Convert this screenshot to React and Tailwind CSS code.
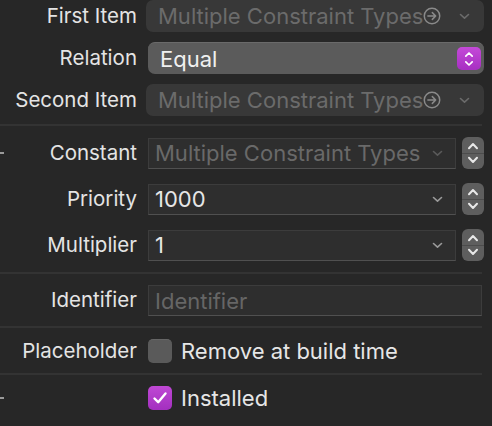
import React from "react";

const Chevron = ({ className = "" }) => (
  <svg width="11" height="7" viewBox="0 0 11 7" className={className}>
    <path d="M1.5 1.5 L5.5 5.2 L9.5 1.5" fill="none" stroke="currentColor" strokeWidth="1.6" strokeLinecap="round" strokeLinejoin="round" />
  </svg>
);

const CircleArrow = () => (
  <svg width="18" height="18" viewBox="0 0 17 17" className="text-[#8a8a8a] shrink-0">
    <circle cx="8.5" cy="8.5" r="7.3" fill="none" stroke="currentColor" strokeWidth="1.4" />
    <path d="M4.6 8.5 H12 M8.8 5.3 L12 8.5 L8.8 11.7" fill="none" stroke="currentColor" strokeWidth="1.4" strokeLinecap="round" strokeLinejoin="round" />
  </svg>
);

const Stepper = () => (
  <div className="w-[22px] h-[32px] rounded-[6px] bg-[#5e5e5e] flex flex-col items-center justify-between py-[5px] text-[#e8e8e8] shrink-0">
    <svg width="12" height="8" viewBox="0 0 12 8">
      <path d="M2 6.2 L6 2 L10 6.2" fill="none" stroke="currentColor" strokeWidth="2" strokeLinecap="round" strokeLinejoin="round" />
    </svg>
    <div className="w-full h-px bg-[#4c4c4c]" />
    <svg width="12" height="8" viewBox="0 0 12 8">
      <path d="M2 1.8 L6 6 L10 1.8" fill="none" stroke="currentColor" strokeWidth="2" strokeLinecap="round" strokeLinejoin="round" />
    </svg>
  </div>
);

const Label = ({ children }) => (
  <div className="w-[138px] shrink-0 text-right text-[#e4e4e4] text-[20.5px] pr-[1px]">{children}</div>
);

const Separator = () => <div className="h-[2px] w-[482px] bg-[#333333]" />;

const DisabledPopup = ({ text }) => (
  <div className="ml-[8px] flex-1 h-[32px] rounded-[7px] bg-[#383838] flex items-center pl-[12px] pr-[14px] text-[#6b6b6b]">
    <span className="whitespace-nowrap">{text}</span>
    <CircleArrow />
    <div className="flex-1" />
    <Chevron className="text-[#6b6b6b]" />
  </div>
);

const ComboField = ({ value, disabled }) => (
  <div className="flex items-center ml-[10px] flex-1 gap-[6px]">
    <div className="flex-1 h-[31px] bg-[#2e2e2e] border border-[#3c3c3c] border-b-[#505050] flex items-center pl-[6px] pr-[12px] overflow-hidden">
      <span className={"whitespace-nowrap " + (disabled ? "text-[#696969]" : "text-[#e6e6e6]")}>{value}</span>
      <div className="flex-1" />
      <Chevron className={"shrink-0 " + (disabled ? "text-[#5a5a5a]" : "text-[#9a9a9a]")} />
    </div>
    <Stepper />
  </div>
);

export default function App() {
  return (
    <div className="relative w-[492px] h-[426px] overflow-hidden bg-[#272727] font-['Inter',sans-serif] text-[22px] leading-none">
      {/* item / relation popups */}
      <div className="flex flex-col gap-[10px] pr-[8px]">
        <div className="flex items-center">
          <Label>First Item</Label>
          <DisabledPopup text="Multiple Constraint Types" />
        </div>
        <div className="flex items-center">
          <Label>Relation</Label>
          <div className="ml-[10px] flex-1 h-[32px] rounded-[7px] bg-[#5b5b5b] border-t border-[#6a6a6a] flex items-center pl-[12px] pr-[3px] text-[#f0f0f0]">
            <span>Equal</span>
            <div className="flex-1" />
            <div className="w-[24px] h-[23px] rounded-[5px] bg-[linear-gradient(#c44ad8,#a72fc2)] flex flex-col items-center justify-center gap-[2px] text-white">
              <svg width="10" height="7" viewBox="0 0 10 7">
                <path d="M1.8 5.2 L5 2 L8.2 5.2" fill="none" stroke="currentColor" strokeWidth="1.7" strokeLinecap="round" strokeLinejoin="round" />
              </svg>
              <svg width="10" height="7" viewBox="0 0 10 7">
                <path d="M1.8 1.8 L5 5 L8.2 1.8" fill="none" stroke="currentColor" strokeWidth="1.7" strokeLinecap="round" strokeLinejoin="round" />
              </svg>
            </div>
          </div>
        </div>
        <div className="flex items-center">
          <Label>Second Item</Label>
          <DisabledPopup text="Multiple Constraint Types" />
        </div>
      </div>

      <div className="mt-[8px]">
        <Separator />
      </div>

      {/* constant / priority / multiplier */}
      <div className="flex flex-col gap-[14px] pr-[8px] mt-[11px]">
        <div className="flex items-center">
          <Label>Constant</Label>
          <ComboField value="Multiple Constraint Types" disabled />
        </div>
        <div className="flex items-center">
          <Label>Priority</Label>
          <ComboField value="1000" />
        </div>
        <div className="flex items-center">
          <Label>Multiplier</Label>
          <ComboField value="1" />
        </div>
      </div>

      <div className="mt-[11px]">
        <Separator />
      </div>

      <div className="flex items-center mt-[11px] pr-[10px]">
        <Label>Identifier</Label>
        <div className="ml-[10px] flex-1 h-[31px] bg-[#2e2e2e] border border-[#3c3c3c] border-b-[#505050] flex items-center pl-[6px] text-[#666666]">
          Identifier
        </div>
      </div>

      <div className="mt-[10px]">
        <Separator />
      </div>

      <div className="flex items-center mt-[11px] h-[24px]">
        <Label>Placeholder</Label>
        <div className="ml-[10px] w-[24px] h-[24px] rounded-[5px] bg-[#5a5a5a] border-t border-[#666666]" />
        <span className="ml-[9px] text-[#e6e6e6]">Remove at build time</span>
      </div>

      <div className="mt-[10px]">
        <Separator />
      </div>

      <div className="flex items-center mt-[11px] h-[24px]">
        <div className="w-[148px] shrink-0" />
        <div className="w-[24px] h-[24px] rounded-[5px] bg-[linear-gradient(#bf48d4,#a32fbf)] flex items-center justify-center text-white">
          <svg width="16" height="14" viewBox="0 0 16 14">
            <path d="M2.5 7.5 L6.2 11.2 L13.5 2.5" fill="none" stroke="currentColor" strokeWidth="2.4" strokeLinecap="round" strokeLinejoin="round" />
          </svg>
        </div>
        <span className="ml-[9px] text-[#e6e6e6]">Installed</span>
      </div>

      {/* edge marks */}
      <div className="absolute left-0 top-[152px] w-[4px] h-[2px] bg-[#9a9a9a]" />
      <div className="absolute left-0 top-[397px] w-[4px] h-[2px] bg-[#9a9a9a]" />
    </div>
  );
}
